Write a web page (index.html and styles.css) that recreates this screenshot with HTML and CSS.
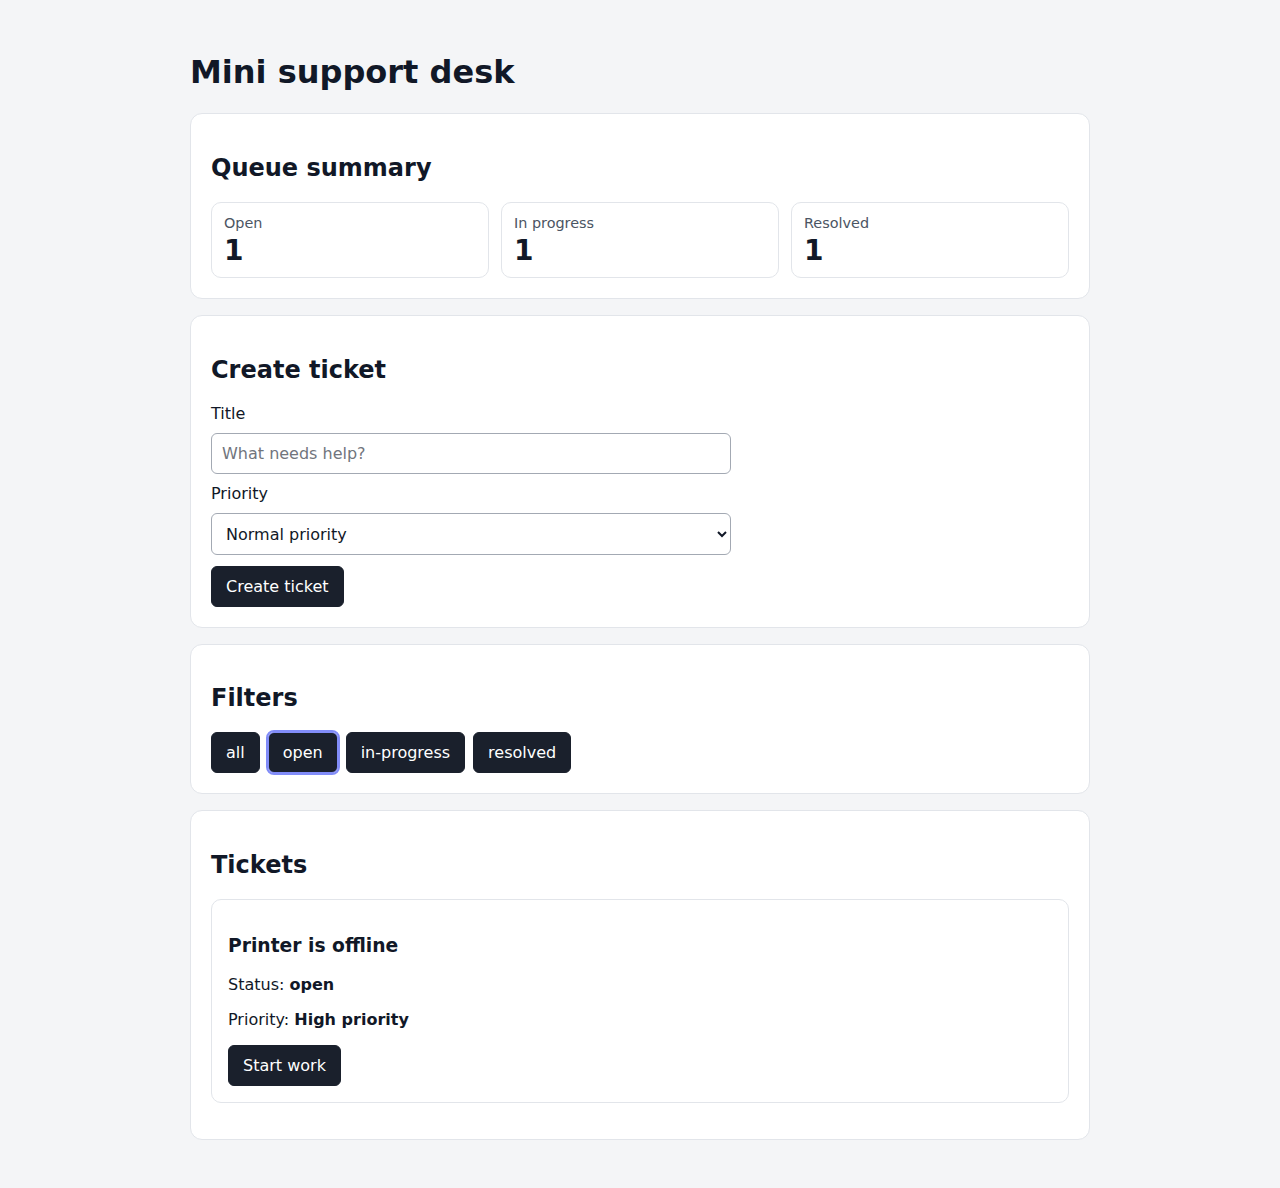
FILE: index.html
```html
<!DOCTYPE html>
<html lang="en">
<head>
<meta charset="utf-8">
<title>Mini support desk</title>
<link rel="stylesheet" href="styles.css">
</head>
<body>
<main class="app">
  <h1 class="page-title">Mini support desk</h1>

  <section class="card">
    <h2>Queue summary</h2>
    <div class="stats">
      <div class="stat"><div class="stat-label">Open</div><div class="stat-value">1</div></div>
      <div class="stat"><div class="stat-label">In progress</div><div class="stat-value">1</div></div>
      <div class="stat"><div class="stat-label">Resolved</div><div class="stat-value">1</div></div>
    </div>
  </section>

  <section class="card">
    <h2>Create ticket</h2>
    <form class="form">
      <label class="field-label" for="title">Title</label>
      <input class="input" id="title" type="text" placeholder="What needs help?">
      <label class="field-label" for="priority">Priority</label>
      <select class="select" id="priority">
        <option>Normal priority</option>
        <option>High priority</option>
        <option>Low priority</option>
      </select>
      <button class="btn btn-submit" type="button">Create ticket</button>
    </form>
  </section>

  <section class="card">
    <h2>Filters</h2>
    <div class="filters">
      <button class="btn" type="button">all</button>
      <button class="btn btn-focus" type="button">open</button>
      <button class="btn" type="button">in-progress</button>
      <button class="btn" type="button">resolved</button>
    </div>
  </section>

  <section class="card">
    <h2>Tickets</h2>
    <div class="ticket">
      <h3>Printer is offline</h3>
      <p>Status: <strong>open</strong></p>
      <p>Priority: <strong>High priority</strong></p>
      <button class="btn" type="button">Start work</button>
    </div>
  </section>
</main>
</body>
</html>
```

FILE: styles.css
```css
html, body {
  margin: 0;
  padding: 0;
}
body {
  background: #f4f5f7;
  color: #111827;
  font-family: "DejaVu Sans", sans-serif;
  font-size: 16px;
}
.app {
  max-width: 900px;
  margin: 0 auto;
  padding: 32px 0 32px;
}
.page-title {
  font-size: 32px;
  font-weight: bold;
  margin: 21.44px 0;
}
.card {
  background: #ffffff;
  border: 1px solid #e2e5ea;
  border-radius: 12px;
  padding: 20px;
  margin-bottom: 16px;
}
.card h2 {
  font-size: 24px;
  margin: 19.92px 0;
}
.stats {
  display: grid;
  grid-template-columns: repeat(3, 1fr);
  gap: 12px;
}
.stat {
  border: 1px solid #e2e5ea;
  border-radius: 10px;
  padding: 12px;
}
.stat-label {
  font-size: 14.4px;
  line-height: 16px;
  color: #4b5563;
}
.stat-value {
  font-size: 28px;
  font-weight: bold;
  line-height: 29px;
  margin-top: 5px;
}
.form {
  display: flex;
  flex-direction: column;
  align-items: flex-start;
  gap: 10px;
}
.field-label {
  font-size: 16px;
}
.input, .select {
  width: 520px;
  box-sizing: border-box;
  font-family: "DejaVu Sans", sans-serif;
  font-size: 16px;
  border: 1px solid #a3a9b3;
  border-radius: 6px;
  background: #ffffff;
  color: #111827;
}
.input {
  padding: 10px 10px;
}
.input::placeholder {
  color: #71757d;
}
.select {
  padding: 10px 10px;
  height: 42px;
}
.btn {
  font-family: "DejaVu Sans", sans-serif;
  font-size: 16px;
  color: #ffffff;
  background: #1a202c;
  border: 1px solid #1a202c;
  border-radius: 6px;
  padding: 10px 14px;
  cursor: pointer;
}
.btn-submit {
  margin-top: 1px;
}
.filters {
  display: flex;
  gap: 8px;
}
.btn-focus {
  border-color: #818cf8;
  outline: 2px solid #818cf8;
  outline-offset: 0;
}
.ticket {
  border: 1px solid #e2e5ea;
  border-radius: 10px;
  padding: 16px;
  margin-bottom: 16px;
}
.ticket h3 {
  font-size: 18.72px;
  margin: 18.72px 0;
}
.ticket p {
  margin: 16px 0;
}
```
